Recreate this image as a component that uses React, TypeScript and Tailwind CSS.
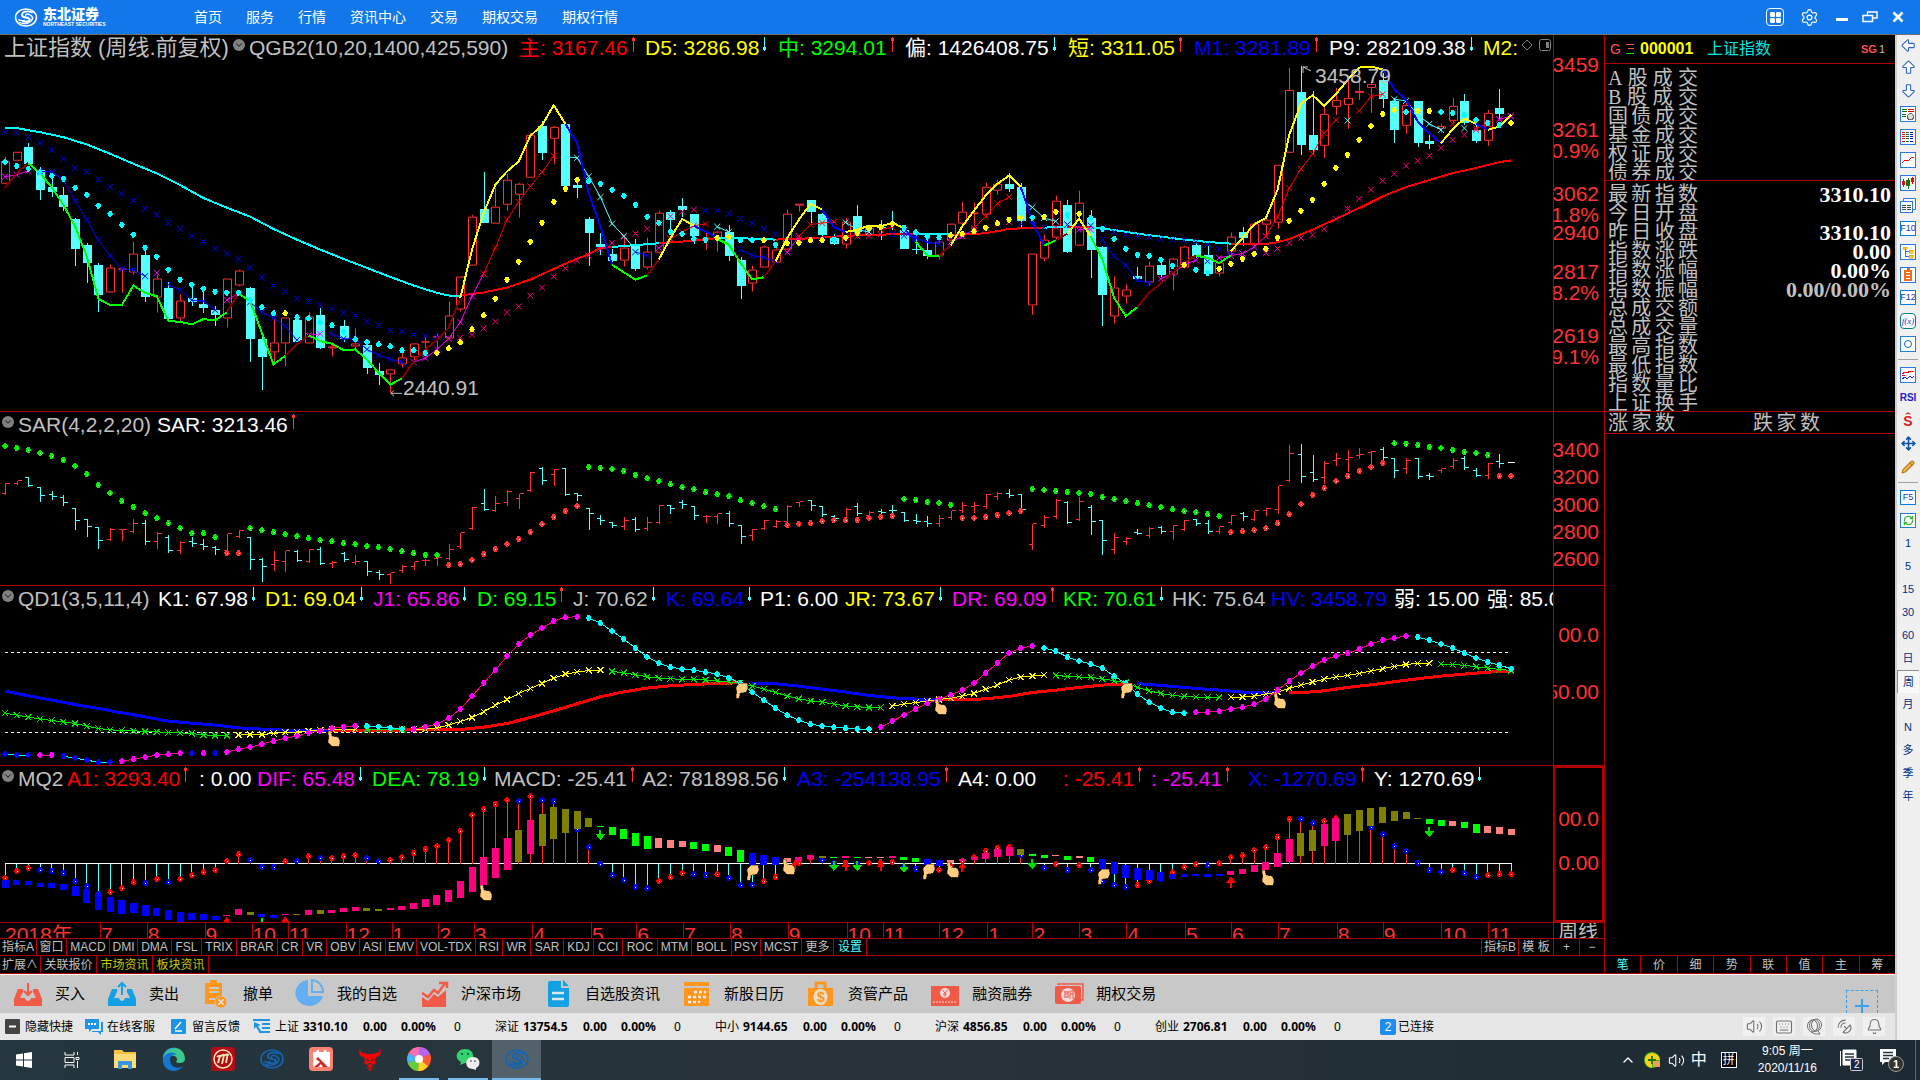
import React from "react";
import {
  ArrowBigDown, ArrowBigLeft, ArrowBigUp, Bell, ChevronDown, ChevronUp, Keyboard, LayoutGrid, Move,
  Pencil, RefreshCw, SatelliteDish, Settings, Volume2,
} from "lucide-react";

/* ---------- chart geometry ---------- */

const STEP = 11.675;
const px = (i: number) => 5 + STEP * i;

type Run = { c: string; s: number; v: number[] };
type Scale = (v: number) => number;

const R = (c: string, s: number, ...v: number[]): Run => ({ c, s, v });

const CY = "#00ffff";
const LC = "#54ffff";
const RD = "#ff3232";
const YL = "#ffff00";
const GN = "#00ff00";
const BL = "#0000ff";
const MG = "#ff00ff";
const MR = "#800000";
const PK = "#ff0080";

// price rows are stored in thirds of a pixel, measured from the top of the window
const priceY: Scale = (v) => v / 3 - 35;
const sarY: Scale = (v) => v / 3 - 13;
const barY: Scale = (v) => sarY(132 + (v - 198) * 0.4228);
const qdY: Scale = (v) => v / 3 - 186;
const mqY: Scale = (v) => v / 3 - 16;

// [direction, high, body top, body bottom, low]; direction 1 = rising
const CANDLES: [number, number, number, number, number][] = [
  [1,472,484,551,551],[1,457,457,482,482],[0,429,441,493,493],[0,500,510,570,600],[0,530,561,575,590],[0,560,584,620,632],
  [0,655,657,746,798],[0,730,736,790,850],[0,790,795,884,938],[1,796,805,880,880],[1,807,807,809,880],[1,727,763,820,825],
  [0,740,765,890,905],[1,825,838,895,938],[0,845,863,960,965],[1,885,904,958,970],[0,855,893,906,920],[0,870,915,927,943],
  [0,920,933,948,980],[1,838,838,958,984],[1,810,814,859,860],[0,861,863,1019,1088],[0,1010,1020,1074,1172],[1,958,1030,1060,1092],
  [1,955,955,1033,1100],[0,950,963,1028,1030],[1,940,952,1033,1033],[0,927,948,1046,1050],[1,1028,1040,1046,1070],[0,964,981,1019,1030],
  [1,988,1033,1040,1048],[0,1033,1037,1106,1124],[0,1092,1116,1128,1158],[1,1111,1111,1126,1182],[1,1060,1073,1096,1105],[1,1033,1033,1073,1088],
  [1,1015,1026,1030,1060],[1,1003,1010,1012,1058],[1,906,949,1016,1016],[1,832,832,931,935],[1,645,650,799,799],[0,516,627,668,668],
  [1,565,622,673,673],[1,522,541,616,632],[1,550,553,586,654],[1,400,404,535,535],[0,363,378,458,480],[1,378,382,418,492],
  [0,370,372,557,557],[0,545,555,564,593],[0,652,657,698,798],[0,700,732,742,764],[0,748,762,783,785],[1,715,745,784,801],
  [0,717,735,807,813],[1,714,757,803,810],[1,633,640,758,762],[0,630,636,660,690],[0,594,618,630,650],[0,642,642,708,732],
  [1,700,715,718,750],[1,692,697,715,756],[0,675,696,768,783],[0,771,780,858,897],[1,798,811,853,876],[1,738,742,803,803],
  [1,740,751,788,788],[1,630,643,751,751],[1,613,613,619,636],[0,600,600,636,668],[0,640,642,705,710],[0,702,714,732,735],
  [1,655,667,734,747],[0,615,648,696,700],[1,675,685,706,710],[0,660,682,685,720],[0,633,670,673,690],[0,678,690,747,747],
  [0,695,747,751,762],[0,710,750,768,777],[1,705,727,767,779],[1,673,673,724,730],[1,606,637,671,680],[1,609,638,643,678],
  [1,550,562,644,655],[1,540,553,574,585],[0,519,552,567,576],[0,550,561,663,680],[1,763,763,917,945],[1,705,721,778,787],
  [1,588,604,715,720],[0,600,615,756,760],[1,573,610,739,739],[0,630,654,750,834],[0,738,741,885,981],[1,831,863,952,972],
  [1,855,871,892,911],[0,800,828,836,840],[1,785,799,850,857],[0,778,795,825,830],[1,775,778,824,873],[1,738,741,805,808],
  [0,730,735,768,775],[0,738,765,821,827],[1,785,790,821,830],[1,700,710,757,765],[0,682,696,715,738],[1,670,673,735,740],
  [1,655,661,674,705],[1,496,496,668,686],[1,204,271,460,460],[0,198,276,434,465],[0,273,405,450,462],[1,322,343,439,474],
  [1,264,301,322,345],[1,240,295,314,387],[1,225,274,280,300],[1,245,253,265,339],[0,220,240,297,323],[0,295,303,390,429],
  [1,300,316,377,402],[0,303,303,429,440],[0,402,423,431,447],[1,373,378,388,398],[1,294,319,364,370],[0,282,303,370,375],
  [0,370,390,423,428],[1,330,340,422,437],[0,267,324,342,360],
];

// sparse lines: colour, then index/value pairs
const TREND: [string, number[]][] = [
  [CY,[0,383,1,385,3,397,5,412,7,434,9,462,11,492,13,521,15,556,17,595,19,624,21,651,23,688,25,720,27,750,29,778,31,805,33,832,35,858,37,880,38,888,39,888]],
  ["#ff0000",[39,888,41,879,43,864,45,840,47,808,49,777,50,764,51,745,52,742]],
  [CY,[52,742,56,731]],
  ["#ff0000",[56,731,58,726,60,720,61,715]],
  [CY,[61,714,64,717,66,720]],
  ["#ff0000",[66,720,69,716,72,709,74,705,78,704]],
  [CY,[78,704,81,704]],
  ["#ff0000",[81,706,84,701,86,688,88,684,89,684]],
  [CY,[89,684,91,681]],
  ["#ff0000",[91,681,93,681]],
  [CY,[93,683,95,691,97,702,99,711,101,720,103,727,105,732]],
  ["#ff0000",[105,732,108,733,109,728,110,718,112,690,114,658,116,625,118,590,120,562,122,541,124,520,126,505,128,487,129,482]],
];

const SWING: Run[] = [
  R(MR,0,565,520,490), R(GN,2,490,520,563,615,680,770,898,917,917,858,880,890,965,967,975,959,963,938), R(MR,19,938,882),
  R(GN,20,882,905,1000,1095,1070), R(MR,24,1070,1035,1008), R(GN,26,1008,1025,1033,1052,1050,1080,1120,1156,1137),
  R(MR,34,1137,1088,1050,1022,985,895), R(YL,39,895,750,640,555,515,485,408,376,316,372), R(BL,48,372,430,580,680,796),
  R(GN,52,796,818,840,828), R(MR,55,828,780), R(YL,56,780,715,658,678), R(BL,59,678,695,715), R(GN,61,718,735,790,840,833),
  R(MR,65,833,785), R(YL,66,785,715,660,612,630), R(BL,70,630,683,697), R(YL,72,697,690,678,680,670,685), R(BL,77,685,726),
  R(GN,78,726,768,768), R(MR,80,768,737), R(YL,81,737,680,633,587,553,527,562), R(BL,87,562,665,738), R(GN,89,738,722),
  R(MR,90,722,702), R(YL,91,702,657,710), R(GN,93,710,780,895,950,923), R(MR,97,923,880,852,820,790,768), R(GN,102,768,775,790,768),
  R(YL,105,755,715,674,655,570,405,312,286,318,283,240,203,200,208), R(BL,118,208,268,300,365,400,430), R(YL,123,430,388,356,372),
  R(BL,126,372,390), R(YL,127,390,380,345),
];

const FAST: Run[] = [
  R(MG,0,531,525,513), R(BL,3,515,516,540,603,660,722,768,808,810,830), R(MG,13,820), R(BL,14,855,872,902,905,932), R(MG,19,902,882),
  R(BL,21,908,938,955,980,1022), R(MG,26,1008,1003), R(BL,28,1003,1018,1018,1050,1067,1080,1088),
  R(MG,35,1088,1076,1050,1017,968,890,822), R("#ff0000",41,822,745,660,607,560,517,468), R(LC,48,471,474,530,592,672,709,750),
  R(BL,54,757,768), R(MG,56,745,718), R("#ff0000",57,718,698,678,673), R(LC,61,681,697), R(BL,63,750,768,773,787), R(MG,67,758,710),
  R("#ff0000",68,710,675,670,667), R(LC,72,668,690,697), R("#ff0000",75,690,683), R(BL,77,700,715,728,733), R(MG,81,728,710,690),
  R("#ff0000",83,685,650,612,592), R(LC,87,600,623,655,665), R(BL,91,675), R(MG,92,690,690), R(BL,94,720,770,797,842,850),
  R(MG,99,838,822,795,782), R(BL,103,785), R(MG,104,775,768,762,742,710), R("#ff0000",108,710,652,565,508,462,400,360), R(LC,115,362),
  R("#ff0000",116,333,290,283), R(LC,119,298,303,345,372,390), R("#ff0000",124,372), R(LC,125,385), R("#ff0000",126,385,372), R(MG,128,358,350),
];

const SLOW: Run[] = [
  R(BL,0,397,399,412,430,451,477,505,516,540,561,582,603,627,645,669,687,709,726,747,762,778,804,834,858,876,897,906,918,927,940,948,966,978,993,996,1005,1010,1013),
  R(PK,38,1018,1015,1006,987,966,939,921,888,864,831,806,783,768,750,730,712,702,687,670,650,636,630),
  R(BL,60,633,633,642,657,670,687,703,715), R(PK,68,718,720), R(BL,70,720,718), R(PK,72,712,710,708,704), R(BL,76,704,708,712,718,722),
  R(PK,81,715,705,695,685,673,667), R(BL,87,672,675,683), R(PK,90,683),
  R(BL,91,675,675,678,687,697,705,708,712,718,720,722,728,735,748,757,762,765),
  R(PK,108,760,747,730,715,706,688,657,627,597,570,543,522,498,483,468,444,420,405,390,375,360,348),
];

const MIDDLE: Run[] = [
  R(CY,0,486,498,507,518,528,537,564,585,618,642,675,705,744,771,810,840,855,867,876,879,879,900,924,942), R(YL,24,942),
  R(CY,25,954,957,968,978,997,1020,1028,1035,1041,1053,1053,1061), R(YL,37,1060,1047,1029,990,948,897,840,786,726,669,606,567,540),
  R(CY,50,545,552,570,588,615,651,669,696,702,717,720), R(YL,61,714,712), R(CY,63,722,722), R(YL,65,722), R(CY,66,735),
  R(YL,67,731,729,722,722), R(CY,71,720), R(YL,72,714,700,685,682,672), R(CY,77,684,698,711,713), R(YL,81,707,703,695,684,671,660,654),
  R(CY,88,654), R(YL,89,651,636), R(CY,91,645), R(YL,92,642), R(CY,93,655,687,717,747,765,768,780,798), R(YL,101,795), R(CY,102,810,819),
  R(YL,104,807,792,777,762,747,714,663,633,600,552,504,465,420,378,342,330), R(CY,120,336), R(YL,121,332,333), R(CY,123,336,339,346,360,370,375), R(YL,129,370),
];

const SG = "#00ee00";
const SAR: Run[] = [
  R(SG,0,141,147,153,162,171,183,201,225,258,282,306,324,342,357,372,387,402,402,414), R(RD,19,462,462),
  R(SG,21,387,393,399,405,411,417,423,426,432,435,441,444,450,456,462,468,468), R(RD,38,498,495,483,465,450,435,420,399,375,354,336,321),
  R(SG,50,204,207,210,216,228,237,246,255,264,270,279,285,291,303,312,321,330), R(RD,67,378,374,372,366,363,363,363,357,354,351),
  R(SG,77,300,303,309,312,318), R(RD,82,357,357,354,348,342,336),
  R(SG,88,270,273,276,279,282,285,294,300,306,312,318,324,330,336,339,345,351), R(RD,105,399,396,393,387,372,345,315,288,267,246,231,216,204,192),
  R(SG,119,133,134,138,144,147,153,159,162,168), R(RD,128,231,231),
];

const QD_BASE: [string, number[]][] = [
  [BL,[0,873,2,887,4,900,6,913,8,925,10,938,12,950,14,963,16,969,18,975,20,983,22,987,24,990,26,992,28,991]],
  ["#ff0000",[28,991,30,991,39,988,41,981,43,970,45,952,47,932,49,911,51,890,53,875,55,864,57,857,59,853,61,850,63,848]],
  [BL,[64,849,66,851,68,858,70,867,72,876,74,886,76,893,78,897,80,898]],
  ["#ff0000",[80,898,82,899,84,896,86,889,88,877,90,870,92,862,94,855,96,851]],
  [BL,[97,851,98,853,100,859,102,865,104,870,106,876,109,878]],
  ["#ff0000",[110,878,111,878,113,872,115,862,117,854,119,845,121,836,123,828,125,822,127,816,129,814]],
];

const QD_D: Run[] = [
  R("#00e600",0,939,945,951,956,961,965,970,978,985,989,991,992,994,995,997,998,1000,1004,1006,1006),
  R(YL,20,1005,1003,1003,1000,996,996,993,990,988,988,987), R("#00e600",31,988,988,988,988),
  R(YL,35,988,987,983,975,964,952,935,915,898,880,865,850,834,822,816,811,810),
  R("#00e600",52,814,818,824,830,834,836,838,838,840,842,846,848,858,867,877,888,896,902,906,912,917,920,922,922),
  R(YL,76,918,912,907,903,898,894,888,880,867,855,840,831,828,825),
  R("#00e600",90,826,829,831,832,836,842,848,862,872,880,886,889,891,892,892),
  R(YL,105,891,891,888,882,876,865,855,846,837,831,826,820,813,806,799,793,790,789), R("#00e600",123,792,793,796,800,804,808,811),
];

const QD_J: Run[] = [
  R(BL,0,1062,1065,1065), R(MG,3,1065,1065), R(BL,5,1068,1074,1080,1086,1086), R(MG,10,1083,1077,1071,1065,1062,1059), R(BL,16,1059), R(MG,17,1059), R(BL,18,1059),
  R(MG,19,1056,1047,1041,1032,1023,1014,1008,998,992,984,980,977), R(CY,31,977,980,983,987),
  R(MG,35,987,980,972,954,927,888,849,810,768,732,705,684,663,652,650),
  R(CY,50,654,669,693,717,744,771,789,801,807,810,816,822,833,850,876,900,924,945,960,972,978,981,984,987,987),
  R(MG,75,981,963,945,927,910,897,884,870,849,819,789,759,744,738), R(CY,89,744,753,771,783,792,804,828,850,882,906,924,936,939),
  R(MG,102,936,936,933,927,921,912,897,870,843,819,798,780,768,759,747,732,720,714,708), R(CY,121,711,720,732,744,759,774,786,795,806),
];

// negative values carry a blue marker, positive ones a red marker
const MQ_STEM = [
  384,362,354,-360,-363,-369,-393,-408,-430,426,414,396,-399,387,-396,387,375,366,360,333,312,-330,-349,-351,333,-333,318,-324,324,318,315,-324,-333,330,321,
  309,297,288,270,243,195,177,162,150,-153,139,-150,-153,-200,-238,-291,-340,-375,-390,-411,-414,393,381,369,-372,-375,372,-384,-405,-405,393,381,354,338,324,
  -330,-339,338,-340,338,336,336,-348,-357,-363,360,348,333,321,303,294,290,-315,-343,-354,342,-360,345,-360,-393,-405,-411,405,392,-385,366,351,342,-345,339,
  321,315,300,291,261,207,-207,-219,212,205,-212,-212,-232,-252,-288,-303,-337,-360,-366,360,-369,-381,375,372,372,
];

const BAR_COLOR: Record<string, string> = { B: BL, P: PK, O: "#808000", G: GN, S: "#ff8080" };
const MQ_BARS =
  "B388-414 B390-404 B393-405 B397-411 B399-413 B402-420 B408-438 B417-457 B428-480 B441-486 B450-492 B459-489 B465-497 B472-498 B480-510 B486-514 B489-510 B492-508 B496-509 P495-498 P477-495 O486-495 B491-501 B495-503 P491-494 O492-495 P480-495 O480-492 P480-489 P474-486 P471-483 O474-483 O477-483 P474-480 P468-480 P459-477 P447-471 P435-465 P420-456 P393-444 P351-426 P321-405 P294-384 P264-360 O240-336 P210-312 O192-288 O171-267 O177-249 O183-237 O204-231 G228-231 G231-255 G237-267 G249-288 G258-297 S264-294 S270-294 S273-291 G276-297 G282-303 S285-306 G291-318 G300-336 B309-345 B315-345 B321-345 S324-336 P321-331 P315-325 O318-324 G321-324 P318-323 G321-324 S321-324 S321-324 P318-323 G321-330 G324-336 B327-345 B330-347 S330-339 P327-333 P321-330 P309-327 P297-321 P291-318 O297-315 G312-318 G315-324 S315-318 G318-330 S318-324 G321-336 B327-357 B336-372 B345-384 B354-390 B360-390 B366-393 B370-387 B372-381 B372-378 B372-381 B372-378 P363-375 P357-371 P345-366 P336-360 P309-351 P267-336 O249-318 O240-303 P222-288 P204-273 O192-255 O180-243 O174-228 O171-219 O183-213 O186-207 O204-207 G207-222 G210-228 S213-228 G216-234 G222-249 S228-249 S231-252 S237-255"
    .split(" ")
    .map((t) => ({ c: BAR_COLOR[t[0]], top: Number(t.slice(1, 4)), bottom: Number(t.slice(5, 8)) }));

/* ---------- chart marks ---------- */

const linePath = (r: Run, y: Scale) => r.v.map((v, k) => `${k ? "L" : "M"}${px(r.s + k)} ${y(v)}`).join("");
const pairPath = (p: number[], y: Scale) => {
  let d = "";
  for (let k = 0; k < p.length; k += 2) d += `${k ? "L" : "M"}${px(p[k])} ${y(p[k + 1])}`;
  return d;
};
const crossAt = (x: number, y: number) => `M${x - 3} ${y - 3}l6 6m0 -6l-6 6`;
const diamondAt = (x: number, y: number) => `M${x - 3} ${y}l2 -3h2l2 3l-2 3h-2z`;

const Lines = ({ runs, y, w, color }: { runs: Run[]; y: Scale; w: number; color?: (c: string) => string }) => (
  <>{runs.map((r, k) => <path key={k} d={linePath(r, y)} stroke={color ? color(r.c) : r.c} strokeWidth={w} fill="none" />)}</>
);
const Crosses = ({ runs, y }: { runs: Run[]; y: Scale }) => (
  <>{runs.map((r, k) => <path key={k} d={r.v.map((v, n) => crossAt(px(r.s + n), y(v))).join("")} stroke={r.c} strokeWidth={1} fill="none" />)}</>
);
const Diamonds = ({ runs, y, spark }: { runs: Run[]; y: Scale; spark?: boolean }) => (
  <>
    {runs.map((r, k) => (
      <g key={k}>
        <path d={r.v.map((v, n) => diamondAt(px(r.s + n), y(v))).join("")} fill={r.c} />
        {spark && <path d={r.v.map((v, n) => `M${px(r.s + n)} ${y(v)}h1v1h-1z`).join("")} fill="#fff" />}
      </g>
    ))}
  </>
);
const Hand = ({ x, y, down }: { x: number; y: number; down?: boolean }) => (
  <path
    transform={`translate(${x} ${y}) scale(1 ${down ? -1 : 1})`}
    d="M-5 -8h3l1 5l6 1l2 4l-1 5h-7l-4 -4v-3h1z"
    fill="#ffcc80" stroke="#6b4410" strokeWidth="0.5"
  />
);
const UpArrow = ({ i, v, s = 1 }: { i: number; v: number; s?: number }) => (
  <path transform={`translate(${px(i)} ${mqY(v)})`} d={s > 1 ? "M0 0l5 7h-4v5h-2v-5h-4z" : "M0 0l4 6h-3v4h-2v-4h-3z"} fill="#ff0000" />
);
const DownArrow = ({ i, v }: { i: number; v: number }) => (
  <path transform={`translate(${px(i)} ${mqY(v)})`} d="M-1 -10h2v4h4l-5 6l-5 -6h4z" fill="#00e000" />
);

const Plot = ({ h, label, children }: { h: number; label: string; children: React.ReactNode }) => (
  <svg role="img" aria-label={label} className="absolute inset-0 h-full w-full" viewBox={`0 0 1553 ${h}`} preserveAspectRatio="none" shapeRendering="crispEdges">
    {children}
  </svg>
);

const PricePlot = () => (
  <Plot h={377} label="上证指数周线">
    {CANDLES.map(([up, hi, t, b, lo], i) => {
      const x = Math.round(px(i)) + 0.5;
      const [H, T, B, L] = [hi, t, b, lo].map((v) => Math.round(priceY(v)));
      return up ? (
        <path key={i} d={`M${x} ${H}V${T}M${x} ${B}V${L}M${x - 4} ${T + 0.5}h8V${Math.max(B - 0.5, T + 0.5)}h-8z`} stroke={RD} fill="none" />
      ) : (
        <g key={i} fill={LC}>
          <rect x={x - 0.5} y={H} width="1" height={L - H} />
          <rect x={x - 4.5} y={T} width="9" height={Math.max(B - T, 1)} />
        </g>
      );
    })}
    {TREND.map(([c, p], k) => <path key={k} d={pairPath(p, priceY)} stroke={c} strokeWidth="2" fill="none" />)}
    <Crosses runs={SLOW} y={priceY} />
    <Lines runs={FAST} y={priceY} w={1} />
    <Crosses runs={FAST} y={priceY} />
    <Lines runs={SWING} y={priceY} w={2} />
    <Diamonds runs={MIDDLE} y={priceY} />
    <path d="M1303 32l8 4M1303 32v6M1303 32h5M391 359h11M391 359l3 -3M391 359l3 3" stroke="#c0c0c0" fill="none" />
  </Plot>
);

const SarPlot = () => (
  <Plot h={172} label="SAR">
    {CANDLES.map(([up, hi, t, b, lo], i) => {
      const x = Math.round(px(i)) + 0.5;
      const [H, T, B, L] = [hi, t, b, lo].map((v) => Math.round(barY(v)) + 0.5);
      return <path key={i} d={`M${x} ${H}V${L + 1}M${x - 4} ${up ? B : T}h4M${x} ${up ? T : B}h4`} stroke={up ? RD : LC} fill="none" />;
    })}
    <path d="M1508 50h7" stroke="#fff" />
    <Diamonds runs={SAR} y={sarY} spark />
  </Plot>
);

const QdPlot = () => (
  <Plot h={179} label="QD1">
    <path d={`M5 ${qdY(757)}H1508M5 ${qdY(997)}H1508`} stroke="#fff" strokeDasharray="3 3" />
    {QD_BASE.map(([c, p], k) => <path key={k} d={pairPath(p, qdY)} stroke={c} strokeWidth="3" fill="none" />)}
    <Lines runs={QD_D} y={qdY} w={1} />
    <Crosses runs={QD_D} y={qdY} />
    <Lines runs={QD_J} y={qdY} w={1} color={(c) => (c === MG ? PK : CY)} />
    <Diamonds runs={QD_J} y={qdY} />
    <Hand x={333} y={153} />
    <Hand x={741} y={104} down />
    <Hand x={940} y={121} />
    <Hand x={1126} y={104} down />
    <Hand x={1279} y={115} />
  </Plot>
);

const MqPlot = () => (
  <Plot h={156} label="MQ2">
    <path d={`M5 ${mqY(340)}H1512`} stroke="#fff" />
    {MQ_STEM.map((s, i) => {
      const v = Math.abs(s);
      return <path key={i} d={`M${px(i)} ${mqY(340)}V${mqY(v)}`} stroke={v < 340 ? RD : LC} />;
    })}
    {MQ_STEM.map((s, i) => (
      <g key={i}>
        <path d={diamondAt(px(i), mqY(Math.abs(s)))} fill={s < 0 ? BL : "#ff0000"} />
        <path d={`M${px(i)} ${mqY(Math.abs(s))}h1v1h-1z`} fill="#fff" />
      </g>
    ))}
    {MQ_BARS.map((b, i) => <path key={i} d={`M${px(i) - 3.5} ${mqY(b.top)}h7V${mqY(b.bottom)}h-7z`} fill={b.c} />)}
    <UpArrow i={19} v={500} /><UpArrow i={24} v={498} /><UpArrow i={67.7} v={326} /><UpArrow i={72} v={332} /><UpArrow i={75} v={332} /><UpArrow i={82} v={336} />
    <UpArrow i={105} v={378} s={2} />
    <path d={`M${px(22)} ${mqY(504)}v4`} stroke={GN} strokeWidth="2" />
    {[[51, 270], [71, 363], [73, 363], [77, 368], [88, 357], [122, 261]].map(([i, v]) => <DownArrow key={i} i={i} v={v} />)}
    <Hand x={485} y={127} />
    <Hand x={752} y={106} down />
    <Hand x={788} y={101} />
    <Hand x={928} y={105} down />
    <Hand x={952} y={104} />
    <Hand x={1103} y={110} down />
    <Hand x={1267} y={112} />
  </Plot>
);

/* ---------- panel headings ---------- */

type Item = { t: string; w: string; c: string; a?: "u" | "d" };
const W = "text-white";
const G = "text-[#c0c0c0]";
const Y = "text-[#ffff00]";
const B = "text-[#0000ff]";
const M = "text-[#ff00ff]";
const L = "text-[#00ff00]";
const D = "text-[#ff0000]";

const ROW1: Item[] = [
  { t: "QGB2(10,20,1400,425,590)", w: "w-[270px]", c: G }, { t: "主: 3167.46", w: "w-[126px]", c: D, a: "u" },
  { t: "D5: 3286.98", w: "w-[133px]", c: Y, a: "d" }, { t: "中: 3294.01", w: "w-[127px]", c: L, a: "u" },
  { t: "偏: 1426408.75", w: "w-[163px]", c: W, a: "d" }, { t: "短: 3311.05", w: "w-[126px]", c: Y, a: "u" },
  { t: "M1: 3281.89", w: "w-[135px]", c: B, a: "u" }, { t: "P9: 282109.38", w: "w-[154px]", c: W, a: "d" }, { t: "M2:", w: "w-[36px]", c: Y },
];
const ROW2: Item[] = [{ t: "SAR(4,2,2,20)", w: "w-[139px]", c: G }, { t: "SAR: 3213.46", w: "w-[150px]", c: W, a: "u" }];
const ROW3: Item[] = [
  { t: "QD1(3,5,11,4)", w: "w-[140px]", c: G }, { t: "K1: 67.98", w: "w-[107px]", c: W, a: "d" }, { t: "D1: 69.04", w: "w-[108px]", c: Y, a: "d" },
  { t: "J1: 65.86", w: "w-[104px]", c: M, a: "d" }, { t: "D: 69.15", w: "w-[96px]", c: L, a: "u" }, { t: "J: 70.62", w: "w-[93px]", c: G, a: "d" },
  { t: "K: 69.64", w: "w-[94px]", c: B, a: "d" }, { t: "P1: 6.00", w: "w-[85px]", c: W }, { t: "JR: 73.67", w: "w-[107px]", c: Y, a: "d" },
  { t: "DR: 69.09", w: "w-[111px]", c: M, a: "u" }, { t: "KR: 70.61", w: "w-[109px]", c: L, a: "d" }, { t: "HK: 75.64", w: "w-[99px]", c: G },
  { t: "HV: 3458.79", w: "w-[123px]", c: B }, { t: "弱: 15.00", w: "w-[93px]", c: W }, { t: "强: 85.00", w: "w-[93px]", c: W },
];
const ROW4: Item[] = [
  { t: "MQ2", w: "w-[49px]", c: G }, { t: "A1: 3293.40", w: "w-[132px]", c: D, a: "u" }, { t: ": 0.00", w: "w-[58px]", c: W },
  { t: "DIF: 65.48", w: "w-[115px]", c: M, a: "d" }, { t: "DEA: 78.19", w: "w-[122px]", c: L, a: "d" }, { t: "MACD: -25.41", w: "w-[148px]", c: G, a: "u" },
  { t: "A2: 781898.56", w: "w-[155px]", c: G, a: "d" }, { t: "A3: -254138.95", w: "w-[161px]", c: B, a: "u" }, { t: "A4: 0.00", w: "w-[105px]", c: W },
  { t: ": -25.41", w: "w-[88px]", c: D, a: "u" }, { t: ": -25.41", w: "w-[97px]", c: M, a: "u" }, { t: "X: -1270.69", w: "w-[126px]", c: B, a: "u" },
  { t: "Y: 1270.69", w: "w-[120px]", c: W, a: "d" },
];

const Trend = ({ a }: { a: "u" | "d" }) => (
  <svg aria-hidden="true" className="mb-2 ml-0.5 h-[15px] w-[7px] shrink-0" viewBox="0 0 7 15" shapeRendering="crispEdges">
    {a === "u" ? <path d="M3 0h1v1h1v3h-1v11h-1v-11h-1v-3h1z" fill={RD} /> : <path d="M3 0h1v10h1v3h-1v1h-1v-1h-1v-3h1z" fill={LC} />}
  </svg>
);

const Toggle = () => (
  <button aria-label="指标菜单" className="mb-1.5 flex size-3 shrink-0 items-center justify-center rounded-full bg-[#808080] text-black">
    <ChevronDown size={10} />
  </button>
);

const Heading = ({ items, lead }: { items: Item[]; lead?: React.ReactNode }) => (
  <div className="relative mt-px flex h-6 items-center whitespace-nowrap text-[21px] leading-6">
    {lead ?? <div className="flex w-[18px] shrink-0 pl-0.5"><Toggle /></div>}
    {items.map((it, k) => (
      <div key={k} className={`flex shrink-0 items-center ${it.w} ${it.c}`}>
        <span>{it.t}</span>
        {it.a && <Trend a={it.a} />}
      </div>
    ))}
  </div>
);

type Tick = { t: string; m: string };
const Axis = ({ ticks, boxed }: { ticks: Tick[]; boxed?: boolean }) => (
  <div className={`flex w-[51px] shrink-0 flex-col overflow-hidden text-[21px] leading-[21px] text-[#ff3232] ${boxed ? "border-2 border-[#b00000] pr-[3px]" : "border-l border-[#b00000] pr-[5px]"}`}>
    {ticks.map((k, n) => (
      <div key={n} className={`flex justify-end ${k.m}`}><span>{k.t}</span></div>
    ))}
  </div>
);

const AX1: Tick[] = [
  { t: "3459", m: "mt-[19px]" }, { t: "3261", m: "mt-11" }, { t: "0.9%", m: "mt-0" }, { t: "3062", m: "mt-[22px]" }, { t: "1.8%", m: "mt-0" },
  { t: "2940", m: "-mt-[3px]" }, { t: "2817", m: "mt-[18px]" }, { t: "8.2%", m: "mt-0" }, { t: "2619", m: "mt-[22px]" }, { t: "9.1%", m: "mt-0" },
];
const AX2: Tick[] = [{ t: "3400", m: "mt-[27px]" }, { t: "3200", m: "mt-1.5" }, { t: "3000", m: "mt-[7px]" }, { t: "2800", m: "mt-1.5" }, { t: "2600", m: "mt-1.5" }];
const AX3: Tick[] = [{ t: "00.0", m: "mt-[38px]" }, { t: "50.00", m: "mt-9" }];
const AX4: Tick[] = [{ t: "00.0", m: "mt-10" }, { t: "0.00", m: "mt-[23px]" }];

const MONTHS: [string, number][] = [
  ["2018年",97],["7",47],["8",58],["9",47],["10",36],["11",58],["12",46],["1",47],["2",35],["3",59],["4",59],["5",45],["6",47],["7",47],["8",58],["9",59],
  ["10",36],["11",57],["12",48],["1",45],["2",47],["3",47],["4",59],["5",46],["6",47],["7",59],["8",46],["9",59],["10",47],["11",65],
];

const TABS: [string, string][] = [
  ["指标A","w-[37px]"],["窗口","w-[30px]"],["MACD","w-[43px]"],["DMI","w-[28px]"],["DMA","w-[34px]"],["FSL","w-[30px]"],["TRIX","w-[35px]"],["BRAR","w-[41px]"],
  ["CR","w-[25px]"],["VR","w-[24px]"],["OBV","w-[33px]"],["ASI","w-[26px]"],["EMV","w-[31px]"],["VOL-TDX","w-[59px]"],["RSI","w-[27px]"],["WR","w-[28px]"],
  ["SAR","w-[33px]"],["KDJ","w-[30px]"],["CCI","w-[29px]"],["ROC","w-[35px]"],["MTM","w-[34px]"],["BOLL","w-[40px]"],["PSY","w-[29px]"],["MCST","w-[41px]"],
  ["更多","w-[32px]"],["设置","w-[33px]"],
];

const ChartRow = ({ size, heading, plot, axis }: { size: string; heading: React.ReactNode; plot: React.ReactNode; axis: React.ReactNode }) => (
  <section className={`flex min-h-0 ${size} border-b border-[#b00000]`}>
    <div className="relative min-w-0 flex-1 overflow-hidden">{plot}{heading}</div>
    {axis}
  </section>
);

const Charts = () => (
  <div className="flex min-w-0 flex-1 flex-col">
    <ChartRow
      size="flex-[378_1_0px]"
      plot={<PricePlot />}
      heading={
        <>
          <Heading
            items={ROW1}
            lead={
              <div className="flex w-[249px] shrink-0 items-center pl-1 text-[#c0c0c0]">
                <h1 className="w-[229px] text-[22px]">上证指数 (周线.前复权)</h1>
                <Toggle />
              </div>
            }
          />
          <div className="absolute right-0.5 top-1 flex items-center gap-1.5 text-[#808080]">
            <svg aria-hidden="true" className="size-3" viewBox="0 0 12 12"><path d="M6 1l5 5l-5 5l-5 -5z" stroke="currentColor" fill="none" /></svg>
            <svg aria-hidden="true" className="size-3" viewBox="0 0 12 12"><rect x="0.5" y="0.5" width="11" height="11" rx="2" stroke="currentColor" fill="none" /><rect x="7" y="3" width="3" height="6" fill="currentColor" /></svg>
          </div>
          <span className="absolute left-[1315px] top-[27px] text-[21px] leading-7 text-[#c0c0c0]">3458.79</span>
          <span className="absolute left-[403px] top-[339px] text-[21px] leading-7 text-[#c0c0c0]">2440.91</span>
        </>
      }
      axis={<Axis ticks={AX1} />}
    />
    <ChartRow size="flex-[173_1_0px]" plot={<SarPlot />} heading={<Heading items={ROW2} />} axis={<Axis ticks={AX2} />} />
    <ChartRow size="flex-[180_1_0px]" plot={<QdPlot />} heading={<Heading items={ROW3} />} axis={<Axis ticks={AX3} />} />
    <ChartRow size="flex-[157_1_0px]" plot={<MqPlot />} heading={<Heading items={ROW4} />} axis={<Axis ticks={AX4} boxed />} />
    <div className="flex h-4 shrink-0 overflow-hidden border-b border-[#b00000] text-[21px] leading-6 text-[#ff3232]">
      <div className="flex min-w-0 flex-1">
        {MONTHS.map(([m, w], k) => (
          <div key={k} className={k ? "min-w-0 basis-0 border-l border-[#b00000]" : "min-w-0 basis-0 whitespace-nowrap pl-[5px]"} style={{ flexGrow: w }}>{m}</div>
        ))}
      </div>
      <div className="w-[51px] shrink-0 border-l border-[#b00000] pl-1 text-xl leading-[18px] text-[#c0c0c0]">周线</div>
    </div>
    <nav aria-label="指标" className="flex h-[17px] shrink-0 border-b border-[#b00000] text-xs leading-4 text-[#c0c0c0]">
      {TABS.map(([t, w]) => (
        <button key={t} className={`${w} flex shrink-0 justify-center overflow-hidden whitespace-nowrap border-r border-[#b00000] ${t === "设置" ? "text-[#54ffff]" : ""}`}>{t}</button>
      ))}
      <div className="flex-1" />
      <button className="w-[37px] border-l border-[#b00000]">指标B</button>
      <button className="w-[35px] border-l border-[#b00000]">模 板</button>
      <button aria-label="放大" className="w-[26px] border-l border-[#b00000]">+</button>
      <button aria-label="缩小" className="w-[25px] border-l border-[#b00000]">−</button>
    </nav>
    <nav aria-label="扩展" className="flex h-[18px] shrink-0 border-b border-[#b00000] text-xs leading-[18px] text-[#c0c0c0]">
      <button className="w-[41px] border-r border-[#b00000]">扩展∧</button>
      <button className="w-14 border-r border-[#b00000]">关联报价</button>
      <button className="w-14 border-r border-[#b00000] text-[#c8c800]">市场资讯</button>
      <button className="w-14 border-r border-[#b00000] text-[#c8c800]">板块资讯</button>
    </nav>
  </div>
);

/* ---------- quote panel ---------- */

const TURNOVER = ["A股成交", "B股成交", "国债成交", "基金成交", "权证成交", "债券成交"];
const QUOTE: [string, string, string][] = [
  ["最新指数","3310.10",W],["今日开盘","",W],["昨日收盘","3310.10",W],["指数涨跌","0.00",W],["指数涨幅","0.00%",W],["指数振幅","0.00/0.00%","text-[#c0c0c0]"],
  ["总成交额","",W],["总成交量","",W],["最高指数","",W],["最低指数","",W],["指数量比","",W],["上证换手","",W],
];

const Quote = () => (
  <aside className="flex w-[291px] shrink-0 flex-col border-l border-[#b00000] text-[#c0c0c0]">
    <header className="flex h-[29px] shrink-0 items-center border-b border-[#b00000] pl-[5px] pr-2.5">
      <span className="w-4 text-sm text-[#ff5050]">G</span>
      <svg aria-hidden="true" className="mr-1.5 h-3 w-2" viewBox="0 0 8 12"><path d="M0 1.500h8M2 5.500h6" stroke="#ff5050" /><path d="M0 10.500h8" stroke="#00e000" /></svg>
      <span className="w-[67px] text-base font-bold text-[#ffff00]">000001</span>
      <h2 className="flex-1 text-base text-[#00e5e5]">上证指数</h2>
      <span className="text-[11px] font-bold text-[#ff5050]">SG</span><span className="pl-0.5 text-[11px]">1</span>
    </header>
    <ul className="h-[117px] shrink-0 overflow-hidden border-b border-[#b00000] pl-[3px] pt-[5px] font-['Liberation_Serif','Noto_Sans_CJK_SC',serif] text-xl leading-[19px]">
      {TURNOVER.map((t) => <li key={t} className="w-[90px] [text-align-last:justify]">{t}</li>)}
    </ul>
    <dl className="h-[231px] shrink-0 overflow-hidden border-b border-[#b00000] pl-[3px] pr-1 pt-1 text-xl leading-[19px]">
      {QUOTE.map(([k, v, c]) => (
        <div key={k} className="flex justify-between">
          <dt className="w-[90px] [text-align-last:justify]">{k}</dt>
          <dd className={`font-['Liberation_Serif',serif] text-[22px] font-bold leading-[19px] ${c}`}>{v}</dd>
        </div>
      ))}
    </dl>
    <div className="flex h-[22px] shrink-0 border-b border-[#b00000] pl-[3px] text-xl leading-[22px]">
      <span className="mr-[78px] w-[67px] [text-align-last:justify]">涨家数</span>
      <span className="w-[67px] [text-align-last:justify]">跌家数</span>
    </div>
    <div className="flex-1" />
    <nav aria-label="明细" className="flex h-[19px] shrink-0 border-y border-[#b00000] text-xs leading-[18px]">
      {["笔", "价", "细", "势", "联", "值", "主", "筹"].map((t, k) => (
        <button key={t} className={`flex-1 ${k ? "border-l border-[#b00000]" : "text-[#54ffff]"}`}>{t}</button>
      ))}
    </nav>
  </aside>
);

/* ---------- right tool strip ---------- */

const Box = ({ children }: { children?: React.ReactNode }) => (
  <svg aria-hidden="true" className="h-4 w-4" viewBox="0 0 16 16" shapeRendering="crispEdges">
    <rect x="0.5" y="0.5" width="15" height="15" fill="#fff" stroke="#2a78e4" />
    {children}
  </svg>
);
const BoxText = ({ t }: { t: string }) => (
  <span className="flex h-[15px] w-4 items-center justify-center overflow-hidden border border-[#0a7ae0] bg-white text-[9px] leading-[13px] text-[#1238b0]">{t}</span>
);
const TOOLS: [string, React.ReactNode][] = [
  ["后退", <ArrowBigLeft size={17} strokeWidth={1.5} color="#2a62c8" fill="#fff" />],
  ["上移", <ArrowBigUp size={17} strokeWidth={1.5} color="#2a62c8" fill="#fff" />],
  ["下移", <ArrowBigDown size={17} strokeWidth={1.5} color="#2a62c8" fill="#fff" />],
  ["选股", <Box><path d="M2 3.500h5M2 5.500h5M2 8.500h4M2 10.500h4" stroke="#008000" /><path d="M8 3.500h6M8 5.500h6" stroke="#e00000" /><circle cx="10.500" cy="10.500" r="3" stroke="#666" fill="#ddd" /></Box>],
  ["报价", <Box><path d="M2 3.500h3M2 5.500h3M2 7.500h3M2 9.500h3M2 12.500h3" stroke="#f00" /><path d="M6 3.500h3M6 5.500h3M6 7.500h3M6 9.500h3M6 12.500h3" stroke="#008000" /><path d="M10 3.500h3M10 5.500h3M10 7.500h3M10 9.500h3M10 12.500h3" stroke="#00f" /></Box>],
  ["分时", <Box><path d="M2 11l3 -3l3 1l3 -3l3 -1" stroke="#f00" fill="none" /></Box>],
  ["K线", <Box><path d="M3.500 4v8M12.500 2v7" stroke="#f00" /><path d="M8 3v11" stroke="#008000" /><path d="M2 6h3v4h-3zM11 3h3v4h-3z" fill="#f00" /><path d="M6 5h4v6h-4z" fill="#008000" /></Box>],
  ["多窗", <svg aria-hidden="true" className="h-4 w-4" viewBox="0 0 16 16"><path d="M3.500 3.500v-3h12v11h-3" stroke="#2a78e4" fill="#fff" /><rect x="0.5" y="3.500" width="12" height="11" stroke="#2a78e4" fill="#fff" /><path d="M2 7.500h4M7 7.500h4M2 9.500h4M7 9.500h4M2 11.500h4M7 11.500h4" stroke="#444" /></svg>],
  ["F10", <BoxText t="F10" />],
  ["板块", <Box><path d="M5 5v7h4M5 7h4" stroke="#2a78e4" fill="none" /><path d="M3 3h4v2h-4zM9 6h4v3h-4zM9 11h4v3h-4z" fill="#ffc820" stroke="#e09000" strokeWidth="0.5" /></Box>],
  ["自选", <Box><path d="M5 4h6v9h-6zM7 2h2v2M5 7h6M5 10h6" stroke="#f07020" fill="none" strokeWidth="1.500" /></Box>],
  ["F12", <BoxText t="F12" />],
  ["公式", <span className="flex size-4 items-center justify-center rounded-sm border border-[#008080] bg-white font-['Liberation_Serif',serif] text-[9px] italic leading-3 text-[#1238b0]">f(x)</span>],
  ["圆", <Box><circle cx="8" cy="8" r="3.500" stroke="#0a6ac8" fill="none" shapeRendering="auto" /></Box>],
  ["", null],
  ["叠加", <Box><path d="M2 7l3 -2l2 1l3 -2l1 1l3 -1M2 9l3 -1" stroke="#f00" fill="none" /><path d="M2 12l3 -2l2 2l3 -3l2 2l2 -2" stroke="#22f" fill="none" /></Box>],
  ["RSI", <span className="text-[10px] font-bold text-[#2222cc]">RSI</span>],
  ["涨停", <span className="text-sm font-bold leading-4 text-[#d02020]">Ŝ</span>],
  ["移动", <Move size={15} strokeWidth={2.5} color="#0a50b0" />],
  ["画线", <Pencil size={14} color="#c07820" fill="#f0b850" />],
  ["", null],
  ["F5", <BoxText t="F5" />],
  ["刷新", <span className="flex h-[15px] w-4 items-center justify-center border border-[#2a78e4] bg-white"><RefreshCw size={11} strokeWidth={3} color="#3cb43c" /></span>],
];

const ToolStrip = () => (
  <aside className="flex w-[25px] shrink-0 flex-col items-center border-l-2 border-[#d0d0d0] bg-[#f0f0f0] pr-px">
    {TOOLS.map(([t, n], k) =>
      n ? (
        <button key={k} aria-label={t} className={`flex w-full shrink-0 items-center justify-center ${k ? "h-[23px]" : "h-[21px]"}`}>{n}</button>
      ) : (
        <div key={k} className="flex h-2 w-5 shrink-0 items-center"><div className="h-px w-full bg-[#a0a0a0]" /></div>
      )
    )}
    {["1", "5", "15", "30", "60", "日", "周", "月", "N", "多", "季", "年"].map((t) => (
      <button key={t} className={`h-[23px] w-full shrink-0 text-[11px] leading-[23px] text-[#003087] ${t === "周" ? "border-l border-t border-[#909090] bg-[#f8f8f8]" : ""}`}>{t}</button>
    ))}
  </aside>
);

/* ---------- title bar ---------- */

const Emblem = ({ className, color }: { className: string; color: string }) => (
  <svg aria-hidden="true" className={className} viewBox="0 0 24 20" fill="none" stroke={color}>
    <ellipse cx="12" cy="10" rx="11" ry="9" strokeWidth="1.600" />
    <path d="M19 5c-5 -3 -12 -1 -11 3c1 3 7 1 8 4c0 2 -4 3 -8 2" strokeWidth="2" />
    <path d="M16 7c-3 -1.500 -5.500 0 -4 1.500M5 15c5 3 12 1 14 -4c0 -2 -1 -3 -3 -3.500M4 12c2 2 4 1.500 7 1" strokeWidth="1.500" />
  </svg>
);

const TitleBar = () => (
  <header className="flex h-[35px] shrink-0 items-center border-b border-[#707070] bg-[#1277eb] text-white">
    <div className="flex w-[194px] items-center pl-3.5">
      <Emblem className="h-[19px] w-6" color="#fff" />
      <div className="pl-[5px]">
        <div className="text-sm font-black leading-[14px]">东北证券</div>
        <div className="whitespace-nowrap text-[5px] font-bold leading-[6px]">NORTHEAST SECURITIES</div>
      </div>
    </div>
    <nav aria-label="主菜单" className="flex gap-6 text-sm">
      {["首页", "服务", "行情", "资讯中心", "交易", "期权交易", "期权行情"].map((t) => <a key={t} href="#" className="text-white">{t}</a>)}
    </nav>
    <div className="ml-auto flex items-center pr-4">
      <button aria-label="布局" className="mr-4 flex size-[18px] items-center justify-center rounded-sm border border-white"><LayoutGrid size={13} fill="#fff" /></button>
      <button aria-label="设置" className="mr-[17px]"><Settings size={19} strokeWidth={1.5} /></button>
      <button aria-label="最小化" className="mr-3.5 mt-1 h-[3px] w-3 bg-white" />
      <button aria-label="还原" className="mr-3.5">
        <svg className="h-3 w-4" viewBox="0 0 16 12" fill="none" stroke="#fff" strokeWidth="1.500"><path d="M5.500 4v-3h9.500v6h-4" /><rect x="1" y="4.500" width="9.500" height="6" /></svg>
      </button>
      <button aria-label="关闭"><svg className="h-3 w-3" viewBox="0 0 12 12" stroke="#fff" strokeWidth="2.500"><path d="M1.500 1.500l9 9M10.500 1.500l-9 9" /></svg></button>
    </div>
  </header>
);

/* ---------- shortcut and status bars ---------- */

const icon = (children: React.ReactNode) => <svg aria-hidden="true" className="h-[30px] w-[30px]" viewBox="0 0 30 30">{children}</svg>;
const RE = "#f25a48";
const BU = "#14a0e4";
const OR = "#ff961e";
const SHORTCUTS: [string, React.ReactNode][] = [
  ["买入", icon(<><path d="M5 10h5v3l-3 6h5c1 4 5 4 6 0h5l-3 -6v-3h5l4 10v7h-28v-7z" fill={RE} /><path d="M15 4v11M11 12l4 4l4 -4" stroke={RE} strokeWidth="2" fill="none" /></>)],
  ["卖出", icon(<><path d="M5 10h5v3l-3 6h5c1 4 5 4 6 0h5l-3 -6v-3h5l4 10v7h-28v-7z" fill={BU} /><path d="M15 16V4M11 8l4 -4l4 4" stroke={BU} strokeWidth="2" fill="none" /></>)],
  ["撤单", icon(<><path d="M4 4h5v-3h7v3h5v14h-3v7h-14z" fill={OR} /><path d="M8 9h10M8 13h10M8 20h6" stroke="#c8c8c8" strokeWidth="2" /><circle cx="20" cy="23" r="6" fill={OR} stroke="#c8c8c8" /><path d="M17.500 20.500l5 5M22.500 20.500l-5 5" stroke="#eee" strokeWidth="1.500" /></>)],
  ["我的自选", icon(<><path d="M13 1v16h15a14 13 0 1 1 -15 -16z" fill="#62aef2" /><path d="M17 1a12 12 0 0 1 11 12h-11z" fill="none" stroke="#62aef2" strokeWidth="2" /></>)],
  ["沪深市场", icon(<><path d="M3 18l6 4l6 -7l4 3l8 -7v17h-24z" fill={RE} /><path d="M3 14l6 4l6 -7l4 3l8 -11M20 4h8v5" stroke={RE} strokeWidth="2.500" fill="none" /></>)],
  ["自选股资讯", icon(<><path d="M5 4q0 -2 2 -2h11v7h8v17q0 2 -2 2h-17q-2 0 -2 -2zM20 1l6 6h-6z" fill={BU} /><path d="M9 14h12M9 20h12" stroke="#d8e8f0" strokeWidth="2.500" /></>)],
  ["新股日历", icon(<><path d="M2 3h25v4h-25zM2 9h25v18h-25z" fill={OR} /><path d="M12 13h12M6 18h18M6 23h12" stroke="#eee" strokeWidth="2.500" strokeDasharray="3 2" /></>)],
  ["资管产品", icon(<><path d="M2 9h25v18h-25z" fill={OR} /><path d="M10 9v-5h9v5" stroke={OR} strokeWidth="3" fill="none" /><ellipse cx="14.500" cy="18" rx="7" ry="8" fill="#e8dccb" /><text x="11" y="23" fontSize="14" fontWeight="bold" fill={OR} fontFamily="Liberation Sans">$</text></>)],
  ["融资融券", icon(<><path d="M1 7h28v20h-28z" fill={RE} /><circle cx="15" cy="14" r="5" fill="#eedddd" /><path d="M12.500 11l2.500 3l2.500 -3M15 14v4M13 15h4" stroke={RE} fill="none" /><path d="M3 23h24" stroke="#eedddd" strokeDasharray="2 1" /></>)],
  ["期权交易", icon(<><path d="M4 6v-1h25v16h-2" stroke={RE} strokeWidth="1.500" fill="none" /><rect x="1" y="7" width="26" height="18" rx="2" fill={RE} /><circle cx="14" cy="16" r="7" fill="#eedddd" /><path d="M11 12v6M14 12v6M10 13h5M10 18h5M11 15h3M16 12h3v8M16 12v8M16 15h3" stroke={RE} fill="none" /></>)],
];

const Shortcuts = () => (
  <nav aria-label="快捷" className="flex h-[39px] shrink-0 items-center gap-[22px] overflow-hidden border-t border-white bg-[#c8c8c8] pl-[13px] text-[15px] text-black">
    {SHORTCUTS.map(([t, n]) => <button key={t} className="flex items-center gap-3">{n}<span>{t}</span></button>)}
    <button aria-label="添加" className="ml-auto mr-[17px] flex h-[23px] w-8 items-center justify-center self-end border border-b-0 border-dashed border-[#38a0f0] pt-2 text-[#38a0f0]">
      <svg className="h-3.5 w-3.5" viewBox="0 0 14 14" stroke="currentColor" strokeWidth="2"><path d="M7 0v14M0 7h14" /></svg>
    </button>
  </nav>
);

const INDEXES: [string, string][] = [["上证", "3310.10"], ["深证", "13754.5"], ["中小", "9144.65"], ["沪深", "4856.85"], ["创业", "2706.81"]];

const Coil = () => (
  <svg aria-hidden="true" className="size-[17px]" viewBox="0 0 17 17" fill="none" stroke="currentColor">
    <ellipse cx="10.500" cy="7" rx="5" ry="6" /><ellipse cx="8.500" cy="7.500" rx="5" ry="6" /><ellipse cx="6.500" cy="8" rx="5" ry="6" /><path d="M5 14l4 2h5l-2 -3" />
  </svg>
);
const ALERTS: [string, React.ReactNode][] = [
  ["声音", <Volume2 size={17} strokeWidth={1.5} />],
  ["键盘", <Keyboard size={18} strokeWidth={1.5} />],
  ["线圈", <Coil />],
  ["卫星", <SatelliteDish size={17} strokeWidth={1.5} className="-scale-x-100" />],
  ["提醒", <Bell size={17} strokeWidth={1.5} />],
];

const StatusBar = () => (
  <footer className="flex h-[27px] shrink-0 items-center bg-[#e6e6e6] pl-[5px] pr-2.5 text-xs text-black">
    <button className="flex w-20 items-center gap-[5px]">
      <svg aria-hidden="true" className="size-[15px]" viewBox="0 0 15 15"><rect width="15" height="15" rx="1" fill="#444" /><path d="M4 7.500h7" stroke="#fff" strokeWidth="2" /></svg>隐藏快捷
    </button>
    <button className="flex w-[86px] items-center gap-1">
      <svg aria-hidden="true" className="h-4 w-[18px]" viewBox="0 0 18 16"><path d="M0 0h14v10h-7l-3 3v-3h-4z" fill="#1e96e8" /><path d="M16 3h2v10h-2v3l-3 -3h-6v-1h9z" fill="#1e96e8" /><path d="M3 5h2M6 5h2M9 5h2" stroke="#fff" strokeWidth="2" /></svg>在线客服
    </button>
    <button className="flex w-[82px] items-center gap-1.5">
      <svg aria-hidden="true" className="size-[15px]" viewBox="0 0 15 15"><rect width="15" height="15" rx="1" fill="#1e96e8" /><path d="M4 10l6 -7M4 12h7" stroke="#fff" strokeWidth="1.500" /></svg>留言反馈
    </button>
    <svg aria-hidden="true" className="mr-[5px] h-[15px] w-[17px]" viewBox="0 0 17 15"><path d="M0 1h17M9 5h8M9 9h8M6 13h11" stroke="#1e96e8" strokeWidth="2" /><path d="M1 3l7 3l-3 1l3 5l-2 1l-3 -5l-2 2z" fill="#1e96e8" /></svg>
    {INDEXES.map(([n, v]) => (
      <div key={n} className="grid w-[220px] grid-cols-[28px_60px_38px_53px_1fr] items-center font-['Noto_Sans','Noto_Sans_CJK_SC',sans-serif] font-bold">
        <span className="font-normal">{n}</span><span>{v}</span><span>0.00</span><span>0.00%</span><span className="font-normal">0</span>
      </div>
    ))}
    <span className="ml-[5px] flex h-4 w-4 items-center justify-center rounded-xs bg-[#1e8cf0] text-white">2</span>
    <span className="pl-0.5">已连接</span>
    <div className="ml-auto flex gap-2 text-[#707070]">
      {ALERTS.map(([t, n]) => <button key={t} aria-label={t} className="flex h-[19px] w-[22px] items-center justify-center bg-[#f0f0f0]">{n}</button>)}
    </div>
  </footer>
);

/* ---------- desktop taskbar ---------- */

const app = (children: React.ReactNode) => <svg aria-hidden="true" className="h-6 w-6" viewBox="0 0 24 24">{children}</svg>;
const APPS: [string, React.ReactNode, string][] = [
  ["资源管理器", app(<><path d="M1 3h8l2 2h12v16h-22z" fill="#f5c242" /><path d="M1 7h22v14h-22z" fill="#ffdc78" /><path d="M5 22v-8h14v8h-4v-4h-6v4z" fill="#3a96e0" /></>), ""],
  ["浏览器", app(<><path d="M1 12c0 -15 22 -15 22 0c0 4 -6 5 -9 3c3 -4 -1 -7 -5 -6c-5 1 -8 3 -8 3z" fill="#3cc88c" /><path d="M1 12c1 -6 10 -9 14 -4c-5 -1 -9 3 -6 9c2 4 8 5 12 2c-6 9 -21 5 -20 -7z" fill="#1478d2" /><path d="M1 11c1 -8 8 -11 13 -10c-6 1 -11 4 -13 10z" fill="#28aae6" /></>), ""],
  ["行情软件", app(<><rect width="24" height="24" rx="3" fill="#b40a14" /><circle cx="12" cy="12" r="9" fill="none" stroke="#ffe6b4" strokeWidth="1.500" /><path d="M7 16l2 -7M11 17l2 -9M15 16l1.500 -8M6 10q2 -2 4 -1q2 -2 4 -1q2 -1 4 0" stroke="#ffe6b4" strokeWidth="1.800" fill="none" /></>), ""],
  ["东北证券", <Emblem className="h-5 w-6" color="#1464b4" />, ""],
  ["截图", app(<><rect width="24" height="24" rx="4" fill="#ff8270" /><path d="M4 5h3l1 -2h2v2h5v-2h2l1 2h3v15h-17z" fill="#fff" /><path d="M5 20l6 -5l-4 -3l2 -2l10 10h-5l-2 -3l-3 3z" fill="#d22828" /></>), ""],
  ["牛", app(<><path d="M2 1c-2 5 0 9 4 9l1 4l-1 2l3 2v3l3 3l3 -3v-3l3 -2l-1 -2l1 -4c4 0 6 -4 4 -9c0 3 -1 5 -4 5l-3 1h-6l-3 -1c-3 0 -4 -2 -4 -5z" fill="#ff0000" /><path d="M8 12l3 2M16 12l-3 2" stroke="#25353d" strokeWidth="1.200" /><circle cx="12" cy="19" r="2.500" fill="none" stroke="#25353d" /></>), ""],
  ["彩轮", app(<><circle cx="12" cy="12" r="12" fill="#fa5028" /><path d="M12 12V0a12 12 0 0 1 11 7z" fill="#b464f0" /><path d="M12 12l11 -5a12 12 0 0 1 -2 12z" fill="#ff5a3c" /><path d="M12 12l9 7a12 12 0 0 1 -10 5z" fill="#ffd228" /><path d="M12 12l-1 12a12 12 0 0 1 -10 -8z" fill="#5ad23c" /><path d="M12 12l-11 4a12 12 0 0 1 1 -10z" fill="#46b4fa" /><path d="M12 12l-10 -6a12 12 0 0 1 10 -6z" fill="#fa6eb4" /><circle cx="12" cy="12" r="4" fill="#fff" /></>), "line"],
  ["微信", app(<><path d="M9 2c11 0 11 14 0 14l-5 2l1 -3c-8 -4 -4 -13 4 -13z" fill="#32d26e" /><circle cx="6" cy="7" r="1" fill="#145" /><circle cx="12" cy="7" r="1" fill="#145" /><path d="M17 10c8 0 8 9 3 11v2l-3 -1c-9 0 -9 -12 0 -12z" fill="#eee" /><circle cx="15" cy="14" r="1" fill="#777" /><circle cx="19" cy="14" r="1" fill="#777" /></>), "line"],
  ["东北证券行情", <Emblem className="h-5 w-6" color="#1464b4" />, "active"],
];

const Taskbar = () => (
  <footer className="flex h-10 shrink-0 items-center bg-linear-to-r from-[#24353e] via-[#283338] to-[#1c2a33] text-white">
    <button aria-label="开始" className="flex w-12 justify-center">
      <svg className="size-4" viewBox="0 0 16 16" fill="#fff"><path d="M0 2.500l7 -1v6h-7zM8 1.300l8 -1.300v7.500h-8zM0 8.500h7v6l-7 -1zM8 8.500h8v7.500l-8 -1.300z" /></svg>
    </button>
    <button aria-label="任务视图" className="mr-1 flex w-12 justify-center">
      <svg className="size-4" viewBox="0 0 16 16" fill="none" stroke="#fff"><path d="M1 0v3h9v-3M1 16v-3h9v3M1 5.500h9v5h-9zM13.500 0v3M13.500 9v7M12 5.500h3v2h-3z" /></svg>
    </button>
    {APPS.map(([t, n, s]) => (
      <button key={t} aria-label={t} className={`flex h-10 w-[49px] flex-col items-center justify-between ${s === "active" ? "bg-[#53626a]" : ""}`}>
        <span className="flex h-[38px] items-center">{n}</span>
        <span className={s === "active" ? "h-0.5 w-full bg-[#76b9ed]" : s ? "h-0.5 w-10 bg-[#76b9ed]" : "h-0.5"} />
      </button>
    ))}
    <div className="ml-auto flex items-center">
      <ChevronUp size={16} className="mr-2" />
      <svg aria-hidden="true" className="mr-2 h-4 w-4" viewBox="0 0 16 16"><circle cx="8" cy="8" r="8" fill="#3cb428" /><path d="M2 4a8 8 0 0 1 14 4h-8v8a8 8 0 0 1 -6 -12z" fill="#fad214" /><path d="M8 4v8M4 8h8" stroke="#1e7814" strokeWidth="2" /><rect x="9" y="9" width="7" height="6" fill="#f0a050" /></svg>
      <Volume2 size={17} strokeWidth={1.5} className="mr-1.5" />
      <span className="mr-3.5 text-base leading-5">中</span>
      <span className="mr-[21px] flex size-4 items-center justify-center border border-white bg-black text-xs leading-[14px]">拼</span>
      <time className="mr-[23px] text-center text-xs leading-[17px]"><div>9:05 周一</div><div>2020/11/16</div></time>
      <button aria-label="任务" className="mr-4">
        <svg className="h-[22px] w-6" viewBox="0 0 24 22"><path d="M0.500 2v15M3 1h13v15h-13z" fill="#fff" stroke="#fff" /><path d="M5 5h9M5 8h9M5 11h5" stroke="#24353e" strokeWidth="1.500" /><rect x="10.500" y="9.500" width="12" height="12" rx="1" fill="#1e2846" stroke="#ccc" /><text x="14" y="19" fontSize="10" fill="#fff" fontFamily="Liberation Sans">2</text></svg>
      </button>
      <button aria-label="通知" className="mr-[11px]">
        <svg className="h-6 w-6" viewBox="0 0 24 24"><path d="M0 1h16v13h-11l-3 3v-3h-2z" fill="#fff" /><path d="M3 4.500h10M3 7.500h10M3 10.500h6" stroke="#24353e" strokeWidth="1.500" /><circle cx="16" cy="16" r="7.500" fill="#333" stroke="#999" /><text x="13" y="20" fontSize="11" fontWeight="bold" fill="#fff" fontFamily="Liberation Sans">1</text></svg>
      </button>
      <div className="mr-1 h-10 w-px bg-[#5a6a72]" />
    </div>
  </footer>
);

export default function App() {
  return (
    <div className="flex h-screen flex-col overflow-hidden bg-black font-['Liberation_Sans','Noto_Sans_CJK_SC',sans-serif]">
      <TitleBar />
      <div className="flex min-h-0 flex-1">
        <div className="flex min-w-0 flex-1 flex-col">
          <main className="flex min-h-0 flex-1">
            <Charts />
            <Quote />
          </main>
          <Shortcuts />
          <StatusBar />
        </div>
        <ToolStrip />
      </div>
      <Taskbar />
    </div>
  );
}
